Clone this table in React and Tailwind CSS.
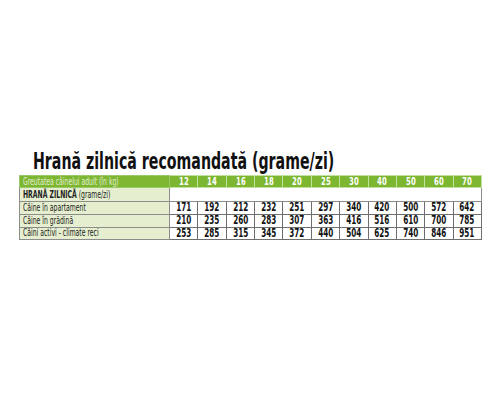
import React from "react";

const weights = [12, 14, 16, 18, 20, 25, 30, 40, 50, 60, 70];

const rows = [
    { label: "Câine în apartament", values: [171, 192, 212, 232, 251, 297, 340, 420, 500, 572, 642] },
    { label: "Câine în grădină", values: [210, 235, 260, 283, 307, 363, 416, 516, 610, 700, 785] },
    { label: "Câini activi - climate reci", values: [253, 285, 315, 345, 372, 440, 504, 625, 740, 846, 951] },
];

const font = { fontFamily: '"DejaVu Sans Condensed", "DejaVu Sans", sans-serif' };

// condensed look: squeeze text horizontally
const Label = ({ children }) => (
    <span className="inline-block whitespace-nowrap origin-left scale-x-[0.68]">{children}</span>
);
const Num = ({ children }) => <span className="inline-block origin-center scale-x-[0.7]">{children}</span>;

export default function App() {
    return (
        <div className="w-[500px] h-[400px] bg-white flex flex-col" style={font}>
            <h1 className="pt-[148px] pl-[33px] text-[23px] leading-[26px] font-bold text-[#111]">
                <span className="inline-block whitespace-nowrap origin-left scale-x-[0.685]">
                    Hrană zilnică recomandată (grame/zi)
                </span>
            </h1>
            <table className="ml-[19px] mt-[1px] w-[463px] table-fixed border-collapse text-[10px] leading-none">
                <colgroup>
                    <col className="w-[150px]" />
                    {weights.map((w) => (
                        <col key={w} />
                    ))}
                </colgroup>
                <tbody>
                    <tr className="h-[12px] bg-[#7db631]">
                        <td className="border border-[#9bc86a] pl-[3px] text-[#e3eed2]">
                            <Label>Greutatea câinelui adult (în kg)</Label>
                        </td>
                        {weights.map((w) => (
                            <td key={w} className="border border-[#c2e09e] text-center text-[11px] font-bold text-white">
                                <Num>{w}</Num>
                            </td>
                        ))}
                    </tr>
                    <tr className="h-[14px]">
                        <td className="border border-[#8c8c8c] bg-[#e5efcf] pl-[3px] text-[#222]">
                            <Label>
                                <span className="font-bold">HRANĂ ZILNICĂ</span> (grame/zi)
                            </Label>
                        </td>
                        <td colSpan={11} className="border border-[#8c8c8c] bg-white" />
                    </tr>
                    {rows.map((r, i) => (
                        <tr key={r.label} className={i === 0 ? "h-[13px]" : "h-[12px]"}>
                            <td className="border border-[#8c8c8c] bg-[#e5efcf] pl-[3px] text-[#222]">
                                <Label>{r.label}</Label>
                            </td>
                            {r.values.map((v, j) => (
                                <td key={j} className="border border-[#6e6e6e] bg-white text-center text-[11.5px] font-bold text-[#111]">
                                    <Num>{v}</Num>
                                </td>
                            ))}
                        </tr>
                    ))}
                </tbody>
            </table>
        </div>
    );
}
